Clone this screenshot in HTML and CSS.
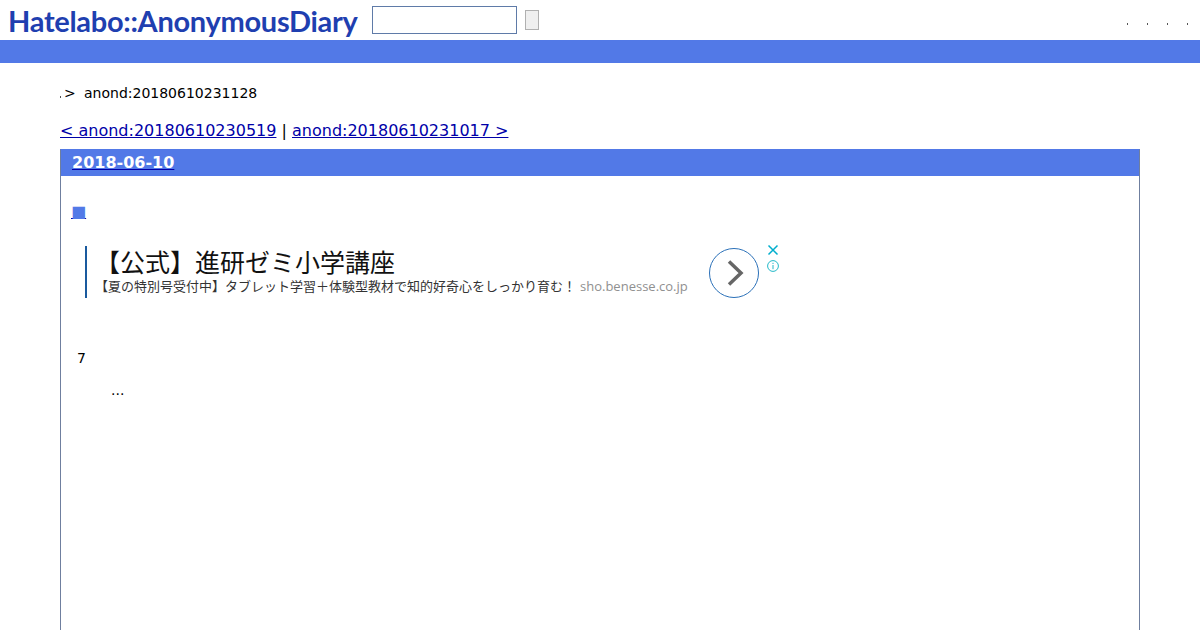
FILE: index.html
```html
<!DOCTYPE html>
<html lang="ja">
  <head>
    <meta charset="utf-8">
    <title>anond:20180610231128</title>
    <link rel="stylesheet" href="styles.css">
  </head>
  <body>
    <div class="header">
      <a class="logo">Hatelabo::AnonymousDiary</a>
      <input class="searchBox" type="text">
      <button class="searchButton"></button>
      <div class="headerLinks">
        <span class="tick"></span>
        <span class="tick"></span>
        <span class="tick"></span>
        <span class="tick"></span>
      </div>
    </div>
    <div class="bar"></div>
    <div class="main">
      <div class="crumbs">
        <span class="crumbDot"></span>
        <span class="crumbArrow">&gt;</span>
        <span>anond:20180610231128</span>
      </div>
      <div class="pager">
        <a href="#">&lt; anond:20180610230519</a> | <a href="#">anond:20180610231017 &gt;</a>
      </div>
      <div class="day">
        <h2 class="dayTitle"><a href="#">2018-06-10</a></h2>
        <div class="dayBody">
          <h3 class="sectionMark"><a href="#">■</a></h3>
          <div class="ad">
            <div class="adText">
              <div class="adTitle">【公式】進研ゼミ小学講座</div>
              <div class="adDesc">【夏の特別号受付中】タブレット学習＋体験型教材で知的好奇心をしっかり育む！<span class="adHost">sho.benesse.co.jp</span></div>
            </div>
            <div class="adGo">
              <svg width="50" height="50" viewBox="0 0 50 50">
                <circle cx="25" cy="25" r="24.5" fill="none" stroke="#2a70b8" stroke-width="1"/>
                <path d="M20 13.5 L32 25 L20 36.5" fill="none" stroke="#666" stroke-width="3.5"/>
              </svg>
            </div>
            <div class="adIcons">
              <svg width="12" height="12" viewBox="0 0 12 12">
                <path d="M1.5 1.5 L10.5 10.5 M10.5 1.5 L1.5 10.5" stroke="#00aecd" stroke-width="1.5"/>
              </svg>
              <svg width="12" height="12" viewBox="0 0 12 12">
                <circle cx="6" cy="6" r="5.4" fill="none" stroke="#22b8c8"/>
                <path d="M6 5 V9.2 M6 2.8 V4" stroke="#22b8c8"/>
              </svg>
            </div>
          </div>
          <p class="count">7</p>
          <p class="excerpt">...</p>
        </div>
      </div>
    </div>
  </body>
</html>
```

FILE: styles.css
```css
html {
  background-color: white;
}
body {
  margin: 0;
  color: black;
  font-family: "DejaVu Sans", sans-serif;
  font-size: 14px;
}
a {
  color: #0000a8;
}
.header {
  display: flex;
  align-items: center;
  height: 40px;
  padding: 0 12px 0 8px;
}
.logo {
  width: 364px;
  color: #1f3fb0;
  font-family: "Lato", sans-serif;
  font-size: 29px;
  font-weight: 700;
  letter-spacing: -0.3px;
  white-space: nowrap;
}
.searchBox {
  box-sizing: border-box;
  width: 145px;
  height: 28px;
  margin: 0;
  border: 1px solid #5f7ba8;
  background: white;
}
.searchButton {
  box-sizing: border-box;
  width: 14px;
  height: 20px;
  margin: 0 0 0 8px;
  padding: 0;
  border: 1px solid #b0b0b0;
  background: #efefef;
}
.headerLinks {
  display: flex;
  gap: 19px;
  margin: 7px 0 0 auto;
}
.tick {
  width: 1px;
  height: 2px;
  background: #555;
}
.bar {
  height: 23px;
  background-color: #5279e7;
}
.main {
  padding: 0 60px;
}
.crumbs {
  display: flex;
  align-items: baseline;
  height: 17px;
  margin-top: 22px;
  line-height: 17px;
}
.crumbDot {
  width: 1px;
  height: 2px;
  margin-right: 3px;
  background: #555;
}
.crumbArrow {
  width: 20px;
}
.pager {
  margin-top: 19px;
  font-size: 16px;
  line-height: 19px;
}
.day {
  box-sizing: border-box;
  height: 481px;
  margin-top: 9px;
  border: 1px solid #5279e7;
  border-bottom: 0;
  border-left-color: #6f7f9f;
  border-right-color: #6f7f9f;
}
.dayTitle {
  margin: 0;
  height: 26px;
  padding-left: 11px;
  background-color: #5279e7;
  font-size: 16px;
  line-height: 25px;
}
.dayTitle a {
  color: white;
  text-decoration-color: #0000a8;
}
.dayBody {
  padding: 0 10px;
}
.sectionMark {
  margin: 0;
  padding-top: 26px;
  height: 20px;
  font-size: 16px;
  font-weight: normal;
  line-height: 20px;
}
.sectionMark a {
  color: #5279e7;
  text-decoration-color: #0000a8;
}
.ad {
  display: flex;
  align-items: flex-start;
  margin: 24px 0 0 14px;
  height: 52px;
}
.adText {
  box-sizing: border-box;
  width: 624px;
  height: 52px;
  padding-left: 8px;
  border-left: 2px solid #1a5a9e;
  font-family: "Noto Sans CJK JP", sans-serif;
}
.adTitle {
  height: 30px;
  font-size: 25px;
  line-height: 30px;
  color: #111;
}
.adDesc {
  margin-top: 1px;
  font-size: 13px;
  line-height: 18px;
  color: #333;
  white-space: nowrap;
}
.adHost {
  margin-left: 4px;
  color: #909090;
  font-family: "Open Sans", sans-serif;
  font-size: 13px;
}
.adGo {
  height: 50px;
  margin-top: 2px;
}
.adIcons {
  display: flex;
  flex-direction: column;
  gap: 4px;
  margin: -2px 0 0 8px;
}
.count {
  margin: 52px 0 0 6px;
  line-height: 17px;
}
.excerpt {
  margin: 15px 0 0 40px;
  line-height: 17px;
}
```
